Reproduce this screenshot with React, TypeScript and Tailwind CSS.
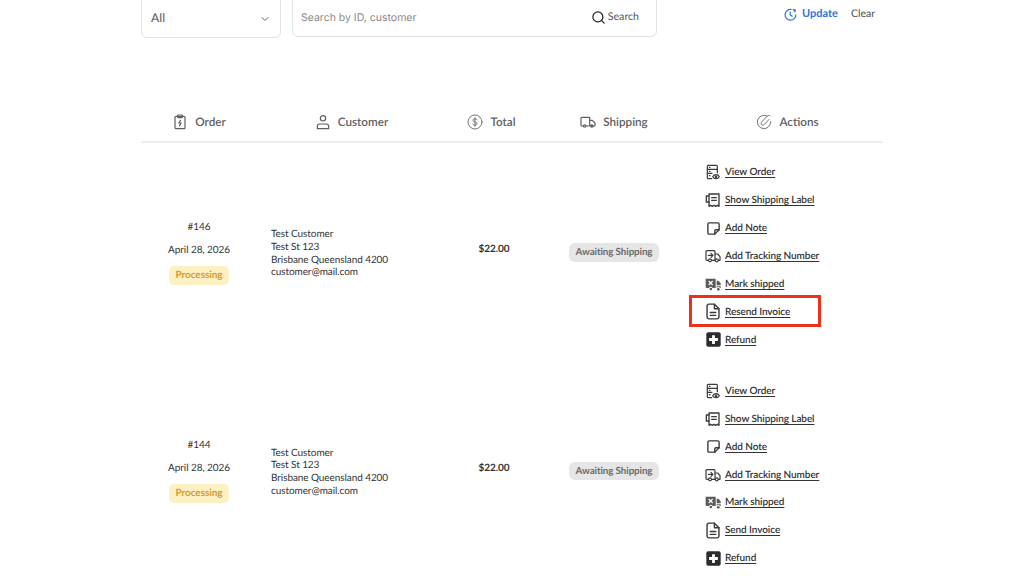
import { ReactNode } from 'react';
import { ChevronDown, Search } from 'lucide-react';

type IconProps = { className?: string };

const Svg = ({ className, children }: IconProps & { children: ReactNode }) => (
  <svg
    viewBox="0 0 24 24"
    fill="none"
    stroke="currentColor"
    strokeWidth="1.8"
    strokeLinecap="round"
    strokeLinejoin="round"
    className={className}
  >
    {children}
  </svg>
);

// Header icons
const OrderIcon = ({ className }: IconProps) => (
  <Svg className={className}>
    <rect x="4.5" y="3.5" width="15" height="18.5" rx="1.5" />
    <rect x="8.5" y="1.5" width="7" height="4" rx="1" />
    <path d="M12.8 9.5l-2.6 4h3.6l-2.6 4" />
  </Svg>
);
const CustomerIcon = ({ className }: IconProps) => (
  <Svg className={className}>
    <circle cx="12" cy="6.5" r="4" />
    <path d="M3.5 22v-3.5a3.5 3.5 0 0 1 3.5-3.5h10a3.5 3.5 0 0 1 3.5 3.5V22z" />
  </Svg>
);
const TotalIcon = ({ className }: IconProps) => (
  <svg viewBox="0 0 24 24" fill="none" stroke="currentColor" strokeWidth="1.3" strokeLinecap="round" className={className}>
    <circle cx="12" cy="12" r="10.5" />
    <path d="M15 8.8c-.5-1-1.6-1.6-3-1.6-1.8 0-3 .9-3 2.3 0 3.3 6.2 1.7 6.2 5 0 1.4-1.3 2.3-3.2 2.3-1.5 0-2.7-.7-3.2-1.8M12 5.5v13" />
  </svg>
);
const ShippingIcon = ({ className }: IconProps) => (
  <Svg className={className}>
    <path d="M5 18H3a1.5 1.5 0 0 1-1.5-1.5v-10A1.5 1.5 0 0 1 3 5h11.5v13H9" />
    <path d="M14.5 9.5h4l4 4V18H20" />
    <circle cx="7" cy="18" r="1.8" />
    <circle cx="17.8" cy="18" r="1.8" fill="currentColor" />
  </Svg>
);
const ActionsIcon = ({ className }: IconProps) => (
  <svg viewBox="0 0 24 24" fill="none" stroke="currentColor" strokeWidth="1.3" strokeLinecap="round" strokeLinejoin="round" className={className}>
    <path d="M16.5 3A10 10 0 1 0 22 11.5" />
    <path d="M21 3c-1.5-1.5-3.5-.8-5 .8l-7 7.7c-1.5 1.7-1.7 3.7-.6 4.7 1.1 1 3.2.5 4.8-1.2l6.3-6.8" />
  </svg>
);
const UpdateIcon = ({ className }: IconProps) => (
  <svg viewBox="0 0 24 24" fill="none" stroke="currentColor" strokeWidth="2.3" strokeLinecap="round" strokeLinejoin="round" className={className}>
    <path d="M13 2.6A10 10 0 1 0 22 12.5" />
    <path d="M11.5 7.5V13l3.5 2" />
    <path d="M17 2.5l4.8 1-1.8 4.5-3-5.5z" fill="currentColor" strokeWidth="1.2" />
  </svg>
);

// Action icons
const ViewOrderIcon = ({ className }: IconProps) => (
  <Svg className={className}>
    <path d="M10 22H5a1.5 1.5 0 0 1-1.5-1.5v-17A1.5 1.5 0 0 1 5 2h12a1.5 1.5 0 0 1 1.5 1.5V13" />
    <path d="M3.5 8h15M3.5 14h7M6.5 5h1M6.5 11h1M6.5 17.5h1" />
    <path d="M11.5 19c1-1.8 2.7-3 5-3s4 1.2 5 3c-1 1.8-2.7 3-5 3s-4-1.2-5-3z" />
    <circle cx="16.5" cy="19" r="1" fill="currentColor" />
  </Svg>
);
const LabelIcon = ({ className }: IconProps) => (
  <svg viewBox="0 0 24 24" fill="none" stroke="currentColor" strokeWidth="2" strokeLinecap="round" strokeLinejoin="round" className={className}>
    <path d="M6 21.5V3h15v18.5l-2.5-1.7-2.5 1.7-2.5-1.7-2.5 1.7-2.5-1.7z" />
    <path d="M6 6H2v9h4M10 8.5h7M10 12.5h7" />
  </svg>
);
const NoteIcon = ({ className }: IconProps) => (
  <svg viewBox="0 0 24 24" fill="none" stroke="currentColor" strokeWidth="2.2" strokeLinecap="round" strokeLinejoin="round" className={className}>
    <path d="M14 21H5a2 2 0 0 1-2-2V5a2 2 0 0 1 2-2h14a2 2 0 0 1 2 2v9z" />
    <path d="M14 21v-5a2 2 0 0 1 2-2h5" />
  </svg>
);
const TrackingIcon = ({ className }: IconProps) => (
  <Svg className={className}>
    <path d="M5 18.5H3A1.5 1.5 0 0 1 1.5 17V5.5A1.5 1.5 0 0 1 3 4h10.5A1.5 1.5 0 0 1 15 5.5v13h-5" />
    <path d="M15 9h4l3.5 4v5.5H20" />
    <circle cx="7.5" cy="18.5" r="2.2" />
    <circle cx="17.7" cy="18.5" r="2.2" />
    <path d="M5 11h6.5M9 8l3 3-3 3" />
  </Svg>
);
const ShippedIcon = ({ className }: IconProps) => (
  <svg viewBox="0 0 24 24" className={className}>
    <path fill="#5a5a5a" d="M1 4h15v14h-4.5a3 3 0 0 0-5.5 0H2.5A1.5 1.5 0 0 1 1 16.5z" />
    <path d="M5.5 7.5l6 6M11.5 7.5l-6 6" stroke="#fff" strokeWidth="1.8" />
    <path fill="#5a5a5a" d="M17.5 7h2.5l3.5 4v3h-6zM17.5 15.5h6V18h-1a2.8 2.8 0 0 0-5 0z" />
    <circle cx="8.8" cy="19.5" r="2" fill="#5a5a5a" />
    <circle cx="20" cy="20" r="2" fill="#5a5a5a" />
  </svg>
);
const InvoiceIcon = ({ className }: IconProps) => (
  <svg viewBox="0 0 20 24" fill="none" stroke="currentColor" strokeWidth="2" strokeLinecap="round" strokeLinejoin="round" className={className}>
    <path d="M12 1.5H4A2.5 2.5 0 0 0 1.5 4v16A2.5 2.5 0 0 0 4 22.5h12a2.5 2.5 0 0 0 2.5-2.5V8z" />
    <path d="M12 1.5V8h6.5M6 13.5h8M6 17.5h8" />
  </svg>
);
const RefundIcon = ({ className }: IconProps) => (
  <svg viewBox="0 0 24 24" className={className}>
    <rect x="0.5" y="0.5" width="23" height="23" rx="3" fill="#2c2c2c" />
    <path d="M12 5v14M5 12h14" stroke="#fff" strokeWidth="4.5" />
  </svg>
);

const ActionLink = ({ icon, label, marked }: { icon: ReactNode; label: string; marked?: boolean }) => (
  <div className="relative flex h-[27.9px] items-center gap-[4px] pl-[22px]">
    <span className="flex w-[16px] justify-center text-[#3a3a3a]">{icon}</span>
    <a className="text-[10px] font-semibold leading-none tracking-[-0.08px] text-[#333] underline underline-offset-2">{label}</a>
    {/* annotation drawn over the screenshot */}
    {marked && <span className="absolute top-[-3px] left-[6px] h-[32px] w-[132px] border-[3.5px] border-[#e8321c]" />}
  </div>
);

const HeaderCell = ({ icon, label, nudge }: { icon: ReactNode; label: string; nudge?: string }) => (
  <div className={`flex items-center justify-center gap-[7px] text-[#5f5f5f] ${nudge ?? ''}`}>
    {icon}
    <span className="text-[11.7px] font-semibold">{label}</span>
  </div>
);

const OrderRow = ({ id, invoiceLabel, marked }: { id: string; invoiceLabel: string; marked?: boolean }) => (
  <div className="grid grid-cols-[116px_183px_105px_138px_200px] pt-[15.5px] pb-[7.7px] tracking-[-0.08px]">
    <div className="flex flex-col items-center justify-center pb-[8px] text-[10px] text-[#333]">
      <span>{id}</span>
      <span className="mt-[8px]">April 28, 2026</span>
      <span className="mt-[8px] rounded-[5px] bg-[#fdf1c4] px-[6.5px] py-[2px] font-bold text-[#d99a27]">Processing</span>
    </div>
    <div className="flex flex-col justify-center pb-[5px] pl-[14px] text-[10px] leading-[12.6px] text-[#333]">
      <span>Test Customer</span>
      <span>Test St 123</span>
      <span>Brisbane Queensland 4200</span>
      <span>customer@mail.com</span>
    </div>
    <div className="flex items-center justify-center pb-[13px] pl-[3px] text-[10px] font-bold text-[#333]">$22.00</div>
    <div className="flex items-center justify-center pb-[7px]">
      <span className="rounded-[6px] bg-[#e6e6e6] px-[7px] py-[2px] text-[9.8px] font-bold tracking-[-0.1px] text-[#6b6b6b]">Awaiting Shipping</span>
    </div>
    <div className="flex flex-col">
      <ActionLink icon={<ViewOrderIcon className="h-[16px] w-[16px]" />} label="View Order" />
      <ActionLink icon={<LabelIcon className="h-[16px] w-[16px]" />} label="Show Shipping Label" />
      <ActionLink icon={<NoteIcon className="h-[15px] w-[15px]" />} label="Add Note" />
      <ActionLink icon={<TrackingIcon className="h-[16px] w-[16px]" />} label="Add Tracking Number" />
      <ActionLink icon={<ShippedIcon className="h-[16px] w-[16px]" />} label="Mark shipped" />
      <ActionLink icon={<InvoiceIcon className="h-[17px] w-[14px]" />} label={invoiceLabel} marked={marked} />
      <ActionLink icon={<RefundIcon className="h-[15px] w-[15px]" />} label="Refund" />
    </div>
  </div>
);

export default function App() {
  return (
    <div className="h-[580px] w-[1024px] overflow-hidden bg-white font-['Lato',sans-serif] [text-rendering:geometricPrecision]">
      <div className="ml-[141px] w-[742px]">
        {/* Filter bar, scrolled partly off the top */}
        <div className="-mt-[10px] flex items-start">
          <div className="flex h-[48px] w-[140px] items-center justify-between rounded-b-[6px] border border-[#e2e2e2] px-[9px] pt-[7px]">
            <span className="text-[12px] font-semibold text-[#6e6e6e]">All</span>
            <ChevronDown className="mt-[2px] h-[12px] w-[12px] text-[#666]" />
          </div>
          <div className="ml-[11px] flex h-[47px] w-[365px] items-center justify-between rounded-[6px] border border-[#e2e2e2] pt-[9px] pr-[17px] pl-[8px]">
            <span className="font-['Inter',sans-serif] text-[10.5px] text-[#8a8a8a]">Search by ID, customer</span>
            <span className="flex items-center gap-[2px] text-[#555]">
              <Search className="h-[15px] w-[15px] text-[#222]" />
              <span className="text-[10.6px]">Search</span>
            </span>
          </div>
          <div className="ml-[127px] flex h-[47px] items-center pt-[2px]">
            <UpdateIcon className="h-[13px] w-[13px] text-[#2f74d8]" />
            <span className="ml-[5px] text-[11px] font-bold text-[#2f74d8]">Update</span>
            <span className="ml-[13px] text-[10.5px] text-[#4d4d4d]">Clear</span>
          </div>
        </div>

        {/* Table header */}
        <div className="mt-[67px] grid h-[38px] grid-cols-[116px_183px_105px_138px_200px] items-center border-b-2 border-[#eeeeee] pb-[1px]">
          <HeaderCell icon={<OrderIcon className="h-[16px] w-[16px]" />} label="Order" />
          <HeaderCell icon={<CustomerIcon className="h-[16px] w-[16px]" />} label="Customer" nudge="pl-[6px]" />
          <HeaderCell icon={<TotalIcon className="h-[16px] w-[16px]" />} label="Total" nudge="pr-[2px]" />
          <HeaderCell icon={<ShippingIcon className="h-[16px] w-[16px]" />} label="Shipping" />
          <HeaderCell icon={<ActionsIcon className="h-[16px] w-[16px]" />} label="Actions" nudge="pl-[9px]" />
        </div>

        <OrderRow id="#146" invoiceLabel="Resend Invoice" marked />
        <OrderRow id="#144" invoiceLabel="Send Invoice" />
      </div>
    </div>
  );
}
